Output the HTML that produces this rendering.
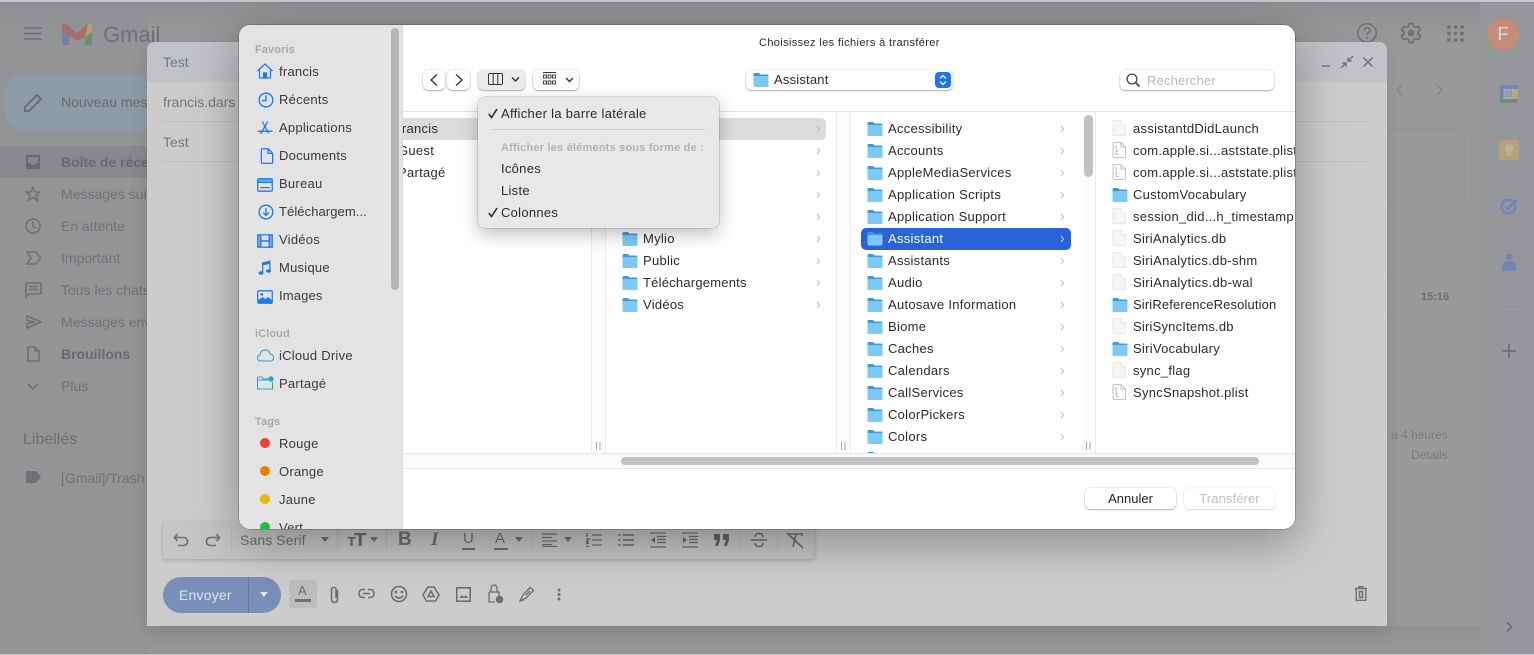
<!DOCTYPE html>
<html lang="fr"><head><meta charset="utf-8"><title>Gmail</title>
<style>
*{box-sizing:border-box}
html,body{margin:0;padding:0}
body{width:1534px;height:655px;overflow:hidden;position:relative;background:#9a9a9b;font-family:"Liberation Sans",sans-serif;font-size:13px}
div,span,svg{position:absolute}
span{white-space:nowrap;line-height:16px;height:16px}
.g{color:#707174;font-size:14px}
.s{color:#3a3a3a;font-size:13px;letter-spacing:.25px;margin-top:1px}
.h{color:#a9a9a9;font-size:11px;font-weight:bold;letter-spacing:.1px;margin-top:1px}
.c{color:#2b2b2b;font-size:13px;letter-spacing:.28px;margin-top:1px}
.btn{background:#fff;border-radius:5px;box-shadow:0 0 0 .5px rgba(0,0,0,.12),0 1px 1.5px rgba(0,0,0,.28)}
.sbi{left:257px;width:16px;height:16px;fill:none;stroke:#1a7cf0;stroke-width:1.2}
.gi{fill:none;stroke:#707174;stroke-width:1.6}
.ti{fill:none;stroke:#6f6f6f;stroke-width:1.6}
.vl{width:1px;background:#ebebeb;top:112px;height:341px}
.dot{left:260px;width:10px;height:10px;border-radius:50%}
</style></head><body>
<svg width="0" height="0" style="left:0;top:0">
<symbol id="f" viewBox="0 0 16 15"><path d="M.5 2.500Q.5 1 2 1H6L7.500 2.500H14Q15.500 2.500 15.500 4V6H.5Z" fill="#3a9bd8"/><path d="M.5 4H15.500V13Q15.500 14.500 14 14.500H2Q.5 14.500 .5 13Z" fill="#7cc8f6"/><path d="M.5 13.500Q1 14.500 2 14.500H14Q15 14.500 15.500 13.500" fill="none" stroke="#5aa9d8" stroke-width=".6"/></symbol>
<symbol id="d" viewBox="0 0 14 16"><path d="M1 1.500Q1 .5 2 .5H9L13.500 5V14.500Q13.500 15.500 12.500 15.500H2Q1 15.500 1 14.500Z" fill="#f6f6f6" stroke="#e2e2e2" stroke-width=".7"/><path d="M9 .5V5H13.500" fill="#fff" stroke="#e2e2e2" stroke-width=".7"/></symbol>
<symbol id="p" viewBox="0 0 14 16"><path d="M1 1.500Q1 .5 2 .5H9L13.500 5V14.500Q13.500 15.500 12.500 15.500H2Q1 15.500 1 14.500Z" fill="#fafafa" stroke="#b5b5b5" stroke-width=".8"/><path d="M9 .5V5H13.500M4 3V12.500M4 12.500H7M4 9.500H6" fill="none" stroke="#b5b5b5" stroke-width=".8"/></symbol>
<symbol id="r" viewBox="0 0 6 10"><path d="M2 2L4.500 5L2 8" fill="none" stroke="#b2b2b2" stroke-width=".9"/></symbol>
</svg>

<!-- window edges -->
<div style="left:0;top:0;width:1534px;height:2px;background:#c7c7c7"></div>
<div style="left:0;top:2px;width:1534px;height:1px;background:#8a8a8a"></div>
<div style="left:0;top:3px;width:147px;height:651px;background:#939496"></div>
<div style="left:0;top:3px;width:1534px;height:40px;background:linear-gradient(#8f9093,rgba(150,151,153,0))"></div>
<div style="left:1480px;top:3px;width:54px;height:651px;background:#96979a"></div>
<div style="left:147px;top:626px;width:1333px;height:28px;background:linear-gradient(#929292,#979797)"></div>
<div style="left:0;top:654px;width:1534px;height:1px;background:#c2c2c2"></div>

<!-- gmail header -->
<svg style="left:24px;top:27px" width="18" height="13"><path d="M0 1H18M0 6.500H18M0 12H18" stroke="#707174" stroke-width="1.500"/></svg>
<svg style="left:62px;top:23px" width="30" height="22" viewBox="0 0 30 22"><path d="M0 4Q0 0 4 1L7 3V22H2Q0 22 0 20Z" fill="#7083a8"/><path d="M30 4Q30 0 26 1L23 3V22H28Q30 22 30 20Z" fill="#6a8f76"/><path d="M23 3L26 1Q30 0 30 4V9L23 14Z" fill="#b3a36f"/><path d="M0 4Q0 0 4 1L15 10L26 1L23 14L15 18L7 13L0 8Z" fill="#a66e6b"/></svg>
<span style="left:103px;top:22px;font-size:22px;line-height:26px;height:26px;color:#707174">Gmail</span>

<svg class="gi" style="left:1356px;top:22px;stroke-width:1.500" width="22" height="22" viewBox="0 0 22 22"><circle cx="11" cy="11" r="9.200"/><path d="M8 8.500Q8.500 5.800 11 5.800Q14 5.800 14 8.300Q14 10 12 11Q11 11.600 11 13.500M11 15V17"/></svg>
<svg style="left:1400px;top:22px" width="22" height="22" viewBox="0 0 22 22"><path d="M9 1.500H13L13.500 4.500L15.500 5.500L18.500 4.500L20.500 8L18 10V12L20.500 14L18.500 17.500L15.500 16.500L13.500 17.500L13 20.500H9L8.500 17.500L6.500 16.500L3.500 17.500L1.500 14L4 12V10L1.500 8L3.500 4.500L6.500 5.500L8.500 4.500Z" fill="none" stroke="#707174" stroke-width="1.800" stroke-linejoin="round"/><circle cx="11" cy="11" r="3.400" fill="#707174"/></svg>
<svg style="left:1447px;top:25px" width="17" height="17" fill="#707174"><circle cx="2" cy="2" r="1.900"/><circle cx="8.500" cy="2" r="1.900"/><circle cx="15" cy="2" r="1.900"/><circle cx="2" cy="8.500" r="1.900"/><circle cx="8.500" cy="8.500" r="1.900"/><circle cx="15" cy="8.500" r="1.900"/><circle cx="2" cy="15" r="1.900"/><circle cx="8.500" cy="15" r="1.900"/><circle cx="15" cy="15" r="1.900"/></svg>
<div style="left:1487px;top:18px;width:32px;height:32px;border-radius:50%;background:#c58c79"></div>
<span style="left:1487px;width:32px;text-align:center;top:24px;font-size:18px;line-height:20px;height:20px;color:#e4d6d1">F</span>

<!-- gmail sidebar -->
<div style="left:5px;top:74px;width:170px;height:56px;border-radius:18px;background:#8e9ba6"></div>
<svg style="left:24px;top:93px" width="19" height="19" viewBox="0 0 19 19"><path d="M1 18V14L13 2L17 6L5 18Z" fill="none" stroke="#66686b" stroke-width="1.800"/></svg>
<span class="g" style="left:61px;top:94px;color:#686a6d">Nouveau mes</span>
<div style="left:0;top:146px;width:147px;height:32px;background:#87898c"></div>
<svg style="left:26px;top:155px" width="14" height="14"><path d="M0 1Q0 0 1 0H13Q14 0 14 1V13Q14 14 13 14H1Q0 14 0 13Z" fill="#696a6d"/><path d="M2 2H12V8H9.500Q9 10 7 10T4.500 8H2Z" fill="#87898c"/></svg>
<span class="g" style="left:61px;top:154px;font-weight:bold;color:#686a6d">Boîte de réce</span>
<svg class="gi" style="left:25px;top:186px" width="16" height="16" viewBox="0 0 16 16"><path d="M8 1.500L10 6H15L11 9.500L12.500 14.500L8 11.500L3.500 14.500L5 9.500L1 6H6Z"/></svg>
<span class="g" style="left:61px;top:186px">Messages sui</span>
<svg class="gi" style="left:25px;top:218px" width="16" height="16" viewBox="0 0 16 16"><circle cx="8" cy="8" r="7"/><path d="M8 3.500V8.500L11 10.500"/></svg>
<span class="g" style="left:61px;top:218px">En attente</span>
<svg class="gi" style="left:26px;top:251px" width="16" height="14" viewBox="0 0 16 14"><path d="M1 1H10L14.500 7L10 13H1L5 7Z"/></svg>
<span class="g" style="left:61px;top:250px">Important</span>
<svg class="gi" style="left:25px;top:282px" width="17" height="17" viewBox="0 0 17 17"><path d="M1 1H16V12H4L1 15ZM4 4.500H13M4 7.500H13"/></svg>
<span class="g" style="left:61px;top:282px">Tous les chats</span>
<svg class="gi" style="left:26px;top:315px" width="16" height="14" viewBox="0 0 16 14"><path d="M1 1L15 7L1 13V8.500L9 7L1 5.500Z"/></svg>
<span class="g" style="left:61px;top:314px">Messages env</span>
<svg class="gi" style="left:27px;top:346px" width="13" height="16" viewBox="0 0 13 16"><path d="M1 1H8L12 5V15H1ZM8 1V5H12"/></svg>
<span class="g" style="left:61px;top:346px;font-weight:bold;color:#686a6d">Brouillons</span>
<svg class="gi" style="left:27px;top:383px" width="12" height="8" viewBox="0 0 12 8"><path d="M1 1L6 6L11 1"/></svg>
<span class="g" style="left:61px;top:378px">Plus</span>
<span class="g" style="left:23px;top:432px;font-size:16px;color:#6d6e71">Libellés</span>
<svg style="left:26px;top:471px" width="15" height="12"><path d="M0 1Q0 0 1 0H10L15 6L10 12H1Q0 12 0 11Z" fill="#707174"/></svg>
<span class="g" style="left:61px;top:470px">[Gmail]/Trash</span>

<!-- gmail right -->
<svg class="gi" style="left:1392px;top:83px;stroke-width:1.100;opacity:.7" width="52" height="14"><path d="M10 2L5 7L10 12M45 2L50 7L45 12"/></svg>
<div style="left:1380px;top:128px;width:85px;height:78px;border:1px solid #939496;border-radius:8px"></div>
<div style="left:1387px;top:276px;width:78px;height:1px;background:#939496"></div>
<div style="left:1387px;top:316px;width:78px;height:1px;background:#939496"></div>
<span style="left:1421px;top:289px;font-size:11px;font-weight:bold;color:#6d6e70">15:16</span>
<span style="left:1391px;top:427px;font-size:12px;color:#797a7c">a 4 heures</span>
<span style="left:1411px;top:447px;font-size:12px;color:#797a7c">Détails</span>
<svg style="left:1500px;top:85px" width="18" height="18"><rect width="18" height="18" rx="1.500" fill="#7186b6"/><path d="M0 14H14V18H2Q0 18 0 16Z" fill="#6a9374"/><path d="M14 4H18V14H14Z" fill="#b8a96a"/><path d="M14 14H18L14 18Z" fill="#a9655f"/><rect x="3.500" y="4" width="10.500" height="10" fill="#a8a9ab"/><text x="8.800" y="12" font-size="8" text-anchor="middle" fill="#7186b6" font-family="Liberation Sans">31</text></svg>
<svg style="left:1499px;top:140px" width="20" height="20"><rect width="20" height="20" rx="2" fill="#b7a173"/><circle cx="10" cy="8.500" r="4.200" fill="#b5b5b0"/><rect x="7.500" y="13.500" width="5" height="2.200" fill="#b5b5b0"/></svg>
<svg style="left:1500px;top:197px" width="19" height="18" fill="none" stroke="#7186b6" stroke-width="2.500"><circle cx="8.500" cy="9.500" r="6.800"/><path d="M5 9L8 12L17 2.500"/></svg>
<svg style="left:1501px;top:253px" width="16" height="18"><circle cx="8" cy="4" r="3.300" fill="#7186b6"/><path d="M1 14Q1 8 8 8Q15 8 15 14V18H1Z" fill="#7186b6"/></svg>
<div style="left:1499px;top:306px;width:20px;height:1px;background:#8d8e90"></div>
<svg style="left:1502px;top:344px" width="14" height="14"><path d="M7 0V14M0 7H14" stroke="#68696c" stroke-width="1.500"/></svg>
<svg style="left:1506px;top:622px" width="7" height="10"><path d="M1 .5L5.500 5L1 9.500" fill="none" stroke="#68696c" stroke-width="1.500"/></svg>

<!-- compose window -->
<div style="left:147px;top:42px;width:1240px;height:584px;background:#cccccc;border-radius:8px 8px 0 0;box-shadow:0 5px 18px rgba(0,0,0,.12);overflow:hidden">
 <div style="left:0;top:0;width:1240px;height:40px;background:#c2c3c6"></div>
</div>
<span style="left:163px;top:54px;font-size:14px;color:#6f7684">Test</span>
<span style="left:163px;top:94px;font-size:14px;color:#77787a">francis.dars</span>
<div style="left:163px;top:121px;width:1208px;height:1px;background:#bebebe"></div>
<span style="left:163px;top:134px;font-size:14px;color:#77787a">Test</span>
<div style="left:163px;top:161px;width:1208px;height:1px;background:#bebebe"></div>
<svg style="left:1322px;top:55px" width="56" height="14" fill="none" stroke="#707174" stroke-width="1.400"><path d="M0 11H8"/><path d="M19 13L24 8M20.500 8H24V11.500M31 1L26 6M26 2.500V6H29.500"/><path d="M41.500 2.500L50.500 11.500M50.500 2.500L41.500 11.500"/></svg>

<!-- format toolbar -->
<div style="left:163px;top:522px;width:651px;height:37px;background:#c5c5c5;box-shadow:0 1px 4px rgba(0,0,0,.22);border-radius:2px"></div>
<svg class="ti" style="left:173px;top:532px" width="48" height="16" viewBox="0 0 48 16"><path d="M4.500 2L1.500 5.500L4.500 9M1.500 5.500H10Q14.500 5.500 14.500 9.500T10 13.500H5M43.500 2L46.500 5.500L43.500 9M46.500 5.500H38Q33.500 5.500 33.500 9.500T38 13.500H43"/></svg>
<span style="left:240px;top:532px;font-size:14px;color:#707174;letter-spacing:.1px">Sans Serif</span>
<svg style="left:320px;top:537px" width="10" height="6"><path d="M1 0H9L5 5Z" fill="#707174"/></svg>
<span style="left:347px;top:532px;font-size:18px;font-weight:bold;color:#6b6b6b;letter-spacing:-2px;transform:scaleX(1.150);transform-origin:left"><small style="font-size:13px">T</small>T</span>
<svg style="left:369px;top:537px" width="10" height="6"><path d="M1 0H9L5 5Z" fill="#707174"/></svg>
<span style="left:398px;top:532px;font-size:19px;font-weight:bold;color:#6f6f6f">B</span>
<span style="left:431px;top:532px;font-size:19px;font-weight:bold;font-style:italic;font-family:'Liberation Serif',serif;color:#6f6f6f">I</span>
<span style="left:463px;top:531px;font-size:15px;color:#6f6f6f">U</span>
<div style="left:462px;top:548px;width:13px;height:1.500px;background:#6f6f6f"></div>
<span style="left:495px;top:531px;font-size:15px;color:#6f6f6f">A</span>
<div style="left:494px;top:548px;width:14px;height:1.500px;background:#6f6f6f"></div>
<svg style="left:514px;top:537px" width="10" height="6"><path d="M1 0H9L5 5Z" fill="#707174"/></svg>
<svg class="ti" style="left:542px;top:533px;stroke-width:1.300" width="16" height="14"><path d="M0 1H15M0 4.500H10M0 8H15M0 11.500H10M0 13.500H15"/></svg>
<svg style="left:563px;top:537px" width="10" height="6"><path d="M1 0H9L5 5Z" fill="#707174"/></svg>
<svg class="ti" style="left:586px;top:533px;stroke-width:1.300" width="16" height="14"><path d="M6 2H16M6 7H16M6 12H16M1 0V4M0 6H3L0 9H3M0 10.500H3M0 13.500H3"/></svg>
<svg class="ti" style="left:618px;top:533px;stroke-width:1.500" width="16" height="14"><path d="M5 2H16M5 7H16M5 12H16M0 2H2.500M0 7H2.500M0 12H2.500"/></svg>
<svg class="ti" style="left:650px;top:532px;stroke-width:1.300" width="16" height="17"><path d="M0 1H16M7 4.500H16M7 7.500H16M7 10.500H16M0 15H16"/><path d="M5 5L1 8L5 11Z" fill="#6f6f6f" stroke="none"/></svg>
<svg class="ti" style="left:682px;top:532px;stroke-width:1.300" width="16" height="17"><path d="M0 1H16M7 4.500H16M7 7.500H16M7 10.500H16M0 15H16"/><path d="M1 5L5 8L1 11Z" fill="#6f6f6f" stroke="none"/></svg>
<svg style="left:714px;top:534px" width="16" height="12" fill="#666"><path d="M0 0H6V6L4 12H1L3 6H0ZM9 0H15V6L13 12H10L12 6H9Z"/></svg>
<svg class="ti" style="left:751px;top:532px" width="16" height="16"><path d="M0 8H16M12 5Q12 1.500 8 1.500T4 5M4 11Q4 14.500 8 14.500T12 11"/></svg>
<svg class="ti" style="left:786px;top:532px" width="18" height="17"><path d="M1 1L17 16M3 2H16V4M10 2L7 15"/></svg>
<div style="left:231px;top:530px;width:1px;height:20px;background:#bababa"></div>
<div style="left:337px;top:530px;width:1px;height:20px;background:#bababa"></div>
<div style="left:386px;top:530px;width:1px;height:20px;background:#bababa"></div>
<div style="left:531px;top:530px;width:1px;height:20px;background:#bababa"></div>
<div style="left:740px;top:530px;width:1px;height:20px;background:#bababa"></div>
<div style="left:777px;top:530px;width:1px;height:20px;background:#bababa"></div>

<!-- send row -->
<div style="left:163px;top:577px;width:118px;height:36px;border-radius:18px;background:#7a8eba"></div>
<div style="left:248px;top:577px;width:1px;height:36px;background:#6a7691"></div>
<span style="left:179px;top:587px;font-size:14px;letter-spacing:.2px;color:#dfe3ec">Envoyer</span>
<svg style="left:259px;top:592px" width="10" height="6"><path d="M1 0H9L5 5Z" fill="#dfe3ec"/></svg>
<div style="left:289px;top:580px;width:28px;height:28px;border-radius:3px;background:#bdbdbd"></div>
<span style="left:298px;top:583px;font-size:13px;color:#6f6f6f">A</span>
<div style="left:295px;top:599px;width:16px;height:3px;background:#6f6f6f"></div>
<svg class="ti" style="left:328px;top:586px" width="13" height="18" viewBox="0 0 13 18"><path d="M9.500 4V13Q9.500 16.500 6.500 16.500T3.500 13V4Q3.500 1.500 6 1.500T8 4V12"/></svg>
<svg class="ti" style="left:358px;top:588px" width="17" height="11"><path d="M7 1.500H5Q1 1.500 1 5.500T5 9.500H7M10 1.500H12Q16 1.500 16 5.500T12 9.500H10M5 5.500H12"/></svg>
<svg class="ti" style="left:390px;top:585px" width="18" height="18"><circle cx="9" cy="9" r="7.500"/><path d="M5 11Q9 15 13 11"/><circle cx="6" cy="7" r=".6"/><circle cx="12" cy="7" r=".6"/></svg>
<svg class="ti" style="left:422px;top:586px" width="18" height="16"><path d="M6 1H12L17 9L13.500 15H4.500L1 9ZM9 5L12 10.500H6Z"/></svg>
<svg class="ti" style="left:456px;top:587px" width="15" height="15"><rect x=".8" y=".8" width="13.400" height="13.400"/><path d="M3 11L6 8L8 10L10 8L12 11Z" fill="#6f6f6f" stroke="none"/></svg>
<svg class="ti" style="left:488px;top:584px;stroke-width:1.300" width="16" height="20"><path d="M1 8H11V13M1 8V18H7M3 8V5Q3 1 6 1T9 5V8"/><circle cx="11.500" cy="15.500" r="3.800" fill="#6f6f6f" stroke="none"/></svg>
<svg class="ti" style="left:519px;top:586px;stroke-width:1.300" width="16" height="17"><path d="M1 15L4 9L11 1.500L14.500 4.500L7 12ZM7 9L11 5M1 15L5 14"/></svg>
<svg style="left:557px;top:588px" width="4" height="13" fill="#707174"><circle cx="2" cy="2" r="1.500"/><circle cx="2" cy="6.500" r="1.500"/><circle cx="2" cy="11" r="1.500"/></svg>
<svg class="ti" style="left:1355px;top:586px;stroke-width:1.400" width="12" height="15"><path d="M0 2.500H12M4 2.500V.7H8V2.500M1.200 2.500V14.300H10.800V2.500M4.500 5.500V11.500H7.500V5.500Z"/></svg>

<!-- dialog -->
<div style="left:239px;top:25px;width:1056px;height:504px;border-radius:11px;background:#fff;box-shadow:0 12px 48px rgba(0,0,0,.34),0 0 0 .5px rgba(0,0,0,.35);overflow:hidden">

 <span style="left:520px;top:10px;font-size:11px;letter-spacing:.37px;color:#2c2c2c">Choisissez les fichiers à transférer</span>

 <div class="btn" style="left:184px;top:45px;width:22px;height:20px"></div>
 <div class="btn" style="left:208px;top:45px;width:23px;height:20px"></div>
 <svg style="left:190px;top:49px" width="36" height="12" fill="none" stroke="#333" stroke-width="1.300"><path d="M8 .5L2 6L8 11.500M27 .5L33 6L27 11.500"/></svg>
 <div class="btn" style="left:239px;top:45px;width:47px;height:20px;background:#ececec"></div>
 <svg style="left:249px;top:48px" width="36" height="13" fill="none" stroke="#333" stroke-width="1"><rect x=".5" y=".5" width="14" height="11" rx="1.500"/><path d="M5.200 .5V11.500M9.800 .5V11.500"/><path d="M24 4.500L27.500 8L31 4.500" stroke-width="1.500"/></svg>
 <div class="btn" style="left:294px;top:45px;width:46px;height:20px"></div>
 <svg style="left:304px;top:47px" width="30" height="14" fill="none" stroke="#333" stroke-width=".9"><path d="M0 .5H13"/><rect x=".5" y="3" width="3" height="3"/><rect x="5" y="3" width="3" height="3"/><rect x="9.500" y="3" width="3" height="3"/><rect x=".5" y="9" width="3" height="3"/><rect x="5" y="9" width="3" height="3"/><rect x="9.500" y="9" width="3" height="3"/><path d="M23 6L26.500 9.500L30 6" stroke="#333" stroke-width="1.500"/></svg>

 <div class="btn" style="left:507px;top:45px;width:207px;height:20px"></div>
 <svg style="left:514px;top:47px" width="16" height="15"><use href="#f"/></svg>
 <span style="left:535px;top:47px;font-size:13px;letter-spacing:.2px;color:#2b2b2b">Assistant</span>
 <div style="left:696px;top:47px;width:16px;height:16px;border-radius:4px;background:#1c73f0"></div>
 <svg style="left:699px;top:49px" width="10" height="12" fill="none" stroke="#fff" stroke-width="1.300"><path d="M2 4.500L5 1.500L8 4.500M2 7.500L5 10.500L8 7.500"/></svg>

 <div class="btn" style="left:881px;top:45px;width:154px;height:20px"></div>
 <svg style="left:887px;top:48px" width="15" height="15" fill="none" stroke="#444" stroke-width="1.300"><circle cx="6" cy="6" r="4.900"/><path d="M9.500 9.500L13.500 13.500" stroke-width="1.700"/></svg>
 <span style="left:908px;top:48px;font-size:13px;letter-spacing:.15px;color:#b9b9b9">Rechercher</span>

 <div style="left:163px;top:86px;width:893px;height:1px;background:#e3e3e3"></div>

 <!-- column browser -->
 <div style="left:164px;top:93px;width:423px;height:22px;background:#dcdcdc;border-radius:0 5px 5px 0"></div>
 <div style="left:164px;top:87px;width:188px;height:341px;overflow:hidden">
  <span class="c" style="left:-5px;top:8px">francis</span>
  <span class="c" style="left:-5px;top:30px">Guest</span>
  <span class="c" style="left:-5px;top:52px">Partagé</span>
 </div>

 <div class="vl" style="left:352px;top:87px"></div><div class="vl" style="left:366px;top:87px"></div>
 <div class="vl" style="left:597px;top:87px"></div><div class="vl" style="left:611px;top:87px"></div>
 <div class="vl" style="left:856px;top:87px"></div>
 <div style="left:353px;top:87px;width:13px;height:341px;background:#fcfcfc"></div>
 <div style="left:598px;top:87px;width:13px;height:341px;background:#fcfcfc"></div>
 <div style="left:843px;top:87px;width:13px;height:341px;background:#fcfcfc"></div>
 <svg style="left:357px;top:417px" width="5" height="8"><path d="M.5 0V8M4 0V8" stroke="#a9a9a9"/></svg>
 <svg style="left:602px;top:417px" width="5" height="8"><path d="M.5 0V8M4 0V8" stroke="#a9a9a9"/></svg>
 <svg style="left:847px;top:417px" width="5" height="8"><path d="M.5 0V8M4 0V8" stroke="#a9a9a9"/></svg>
 <div style="left:845px;top:90px;width:9px;height:62px;border-radius:5px;background:#c1c1c1"></div>

 <!-- col 2 -->
 <svg style="left:383px;top:206px" width="16" height="15"><use href="#f"/></svg><span class="c" style="left:404px;top:205px">Mylio</span>
 <svg style="left:383px;top:228px" width="16" height="15"><use href="#f"/></svg><span class="c" style="left:404px;top:227px">Public</span>
 <svg style="left:383px;top:250px" width="16" height="15"><use href="#f"/></svg><span class="c" style="left:404px;top:249px;letter-spacing:.22px">Téléchargements</span>
 <svg style="left:383px;top:272px" width="16" height="15"><use href="#f"/></svg><span class="c" style="left:404px;top:271px">Vidéos</span>
 <svg style="left:576px;top:99px" width="6" height="10"><use href="#r"/></svg>
 <svg style="left:576px;top:121px" width="6" height="10"><use href="#r"/></svg>
 <svg style="left:576px;top:143px" width="6" height="10"><use href="#r"/></svg>
 <svg style="left:576px;top:165px" width="6" height="10"><use href="#r"/></svg>
 <svg style="left:576px;top:187px" width="6" height="10"><use href="#r"/></svg>
 <svg style="left:576px;top:209px" width="6" height="10"><use href="#r"/></svg>
 <svg style="left:576px;top:231px" width="6" height="10"><use href="#r"/></svg>
 <svg style="left:576px;top:253px" width="6" height="10"><use href="#r"/></svg>
 <svg style="left:576px;top:275px" width="6" height="10"><use href="#r"/></svg>

 <!-- col 3 -->
 <div style="left:622px;top:203px;width:210px;height:22px;border-radius:5px;background:#2a63d9"></div>
 <svg style="left:628px;top:96px" width="16" height="15"><use href="#f"/></svg><span class="c" style="left:649px;top:95px">Accessibility</span>
 <svg style="left:628px;top:118px" width="16" height="15"><use href="#f"/></svg><span class="c" style="left:649px;top:117px">Accounts</span>
 <svg style="left:628px;top:140px" width="16" height="15"><use href="#f"/></svg><span class="c" style="left:649px;top:139px">AppleMediaServices</span>
 <svg style="left:628px;top:162px" width="16" height="15"><use href="#f"/></svg><span class="c" style="left:649px;top:161px;letter-spacing:.33px">Application Scripts</span>
 <svg style="left:628px;top:184px" width="16" height="15"><use href="#f"/></svg><span class="c" style="left:649px;top:183px">Application Support</span>
 <svg style="left:628px;top:206px" width="16" height="15"><use href="#f"/></svg><span class="c" style="left:649px;top:205px;color:#fff">Assistant</span>
 <svg style="left:628px;top:228px" width="16" height="15"><use href="#f"/></svg><span class="c" style="left:649px;top:227px">Assistants</span>
 <svg style="left:628px;top:250px" width="16" height="15"><use href="#f"/></svg><span class="c" style="left:649px;top:249px">Audio</span>
 <svg style="left:628px;top:272px" width="16" height="15"><use href="#f"/></svg><span class="c" style="left:649px;top:271px">Autosave Information</span>
 <svg style="left:628px;top:294px" width="16" height="15"><use href="#f"/></svg><span class="c" style="left:649px;top:293px">Biome</span>
 <svg style="left:628px;top:316px" width="16" height="15"><use href="#f"/></svg><span class="c" style="left:649px;top:315px">Caches</span>
 <svg style="left:628px;top:338px" width="16" height="15"><use href="#f"/></svg><span class="c" style="left:649px;top:337px">Calendars</span>
 <svg style="left:628px;top:360px" width="16" height="15"><use href="#f"/></svg><span class="c" style="left:649px;top:359px">CallServices</span>
 <svg style="left:628px;top:382px" width="16" height="15"><use href="#f"/></svg><span class="c" style="left:649px;top:381px">ColorPickers</span>
 <svg style="left:628px;top:404px" width="16" height="15"><use href="#f"/></svg><span class="c" style="left:649px;top:403px">Colors</span>
 <svg style="left:628px;top:426px" width="16" height="15"><use href="#f"/></svg>
 <svg style="left:820px;top:99px" width="6" height="10"><use href="#r"/></svg>
 <svg style="left:820px;top:121px" width="6" height="10"><use href="#r"/></svg>
 <svg style="left:820px;top:143px" width="6" height="10"><use href="#r"/></svg>
 <svg style="left:820px;top:165px" width="6" height="10"><use href="#r"/></svg>
 <svg style="left:820px;top:187px" width="6" height="10"><use href="#r"/></svg>
 <svg style="left:820px;top:209px" width="6" height="10" fill="none"><path d="M2 2L4.500 5L2 8" stroke="#dfe7fa" stroke-width=".9"/></svg>
 <svg style="left:820px;top:231px" width="6" height="10"><use href="#r"/></svg>
 <svg style="left:820px;top:253px" width="6" height="10"><use href="#r"/></svg>
 <svg style="left:820px;top:275px" width="6" height="10"><use href="#r"/></svg>
 <svg style="left:820px;top:297px" width="6" height="10"><use href="#r"/></svg>
 <svg style="left:820px;top:319px" width="6" height="10"><use href="#r"/></svg>
 <svg style="left:820px;top:341px" width="6" height="10"><use href="#r"/></svg>
 <svg style="left:820px;top:363px" width="6" height="10"><use href="#r"/></svg>
 <svg style="left:820px;top:385px" width="6" height="10"><use href="#r"/></svg>
 <svg style="left:820px;top:407px" width="6" height="10"><use href="#r"/></svg>

 <!-- col 4 -->
 <svg style="left:873px;top:95px" width="14" height="16"><use href="#d"/></svg><span class="c" style="left:894px;top:95px">assistantdDidLaunch</span>
 <svg style="left:873px;top:117px" width="14" height="16"><use href="#p"/></svg><span class="c" style="left:894px;top:117px">com.apple.si...aststate.plist</span>
 <svg style="left:873px;top:139px" width="14" height="16"><use href="#p"/></svg><span class="c" style="left:894px;top:139px">com.apple.si...aststate.plist</span>
 <svg style="left:873px;top:162px" width="16" height="15"><use href="#f"/></svg><span class="c" style="left:894px;top:161px">CustomVocabulary</span>
 <svg style="left:873px;top:183px" width="14" height="16"><use href="#d"/></svg><span class="c" style="left:894px;top:183px">session_did...h_timestamp</span>
 <svg style="left:873px;top:205px" width="14" height="16"><use href="#d"/></svg><span class="c" style="left:894px;top:205px">SiriAnalytics.db</span>
 <svg style="left:873px;top:227px" width="14" height="16"><use href="#d"/></svg><span class="c" style="left:894px;top:227px;letter-spacing:.34px">SiriAnalytics.db-shm</span>
 <svg style="left:873px;top:249px" width="14" height="16"><use href="#d"/></svg><span class="c" style="left:894px;top:249px;letter-spacing:.36px">SiriAnalytics.db-wal</span>
 <svg style="left:873px;top:272px" width="16" height="15"><use href="#f"/></svg><span class="c" style="left:894px;top:271px;letter-spacing:.14px">SiriReferenceResolution</span>
 <svg style="left:873px;top:293px" width="14" height="16"><use href="#d"/></svg><span class="c" style="left:894px;top:293px;letter-spacing:.2px">SiriSyncItems.db</span>
 <svg style="left:873px;top:316px" width="16" height="15"><use href="#f"/></svg><span class="c" style="left:894px;top:315px">SiriVocabulary</span>
 <svg style="left:873px;top:337px" width="14" height="16"><use href="#d"/></svg><span class="c" style="left:894px;top:337px">sync_flag</span>
 <svg style="left:873px;top:359px" width="14" height="16"><use href="#p"/></svg><span class="c" style="left:894px;top:359px">SyncSnapshot.plist</span>

 <!-- horizontal scroller -->
 <div style="left:163px;top:428px;width:893px;height:16px;background:#fafafa;border-top:1px solid #e6e6e6;border-bottom:1px solid #e6e6e6"></div>
 <div style="left:382px;top:432px;width:638px;height:8px;border-radius:4px;background:#c1c1c1"></div>

 <!-- bottom buttons -->
 <div class="btn" style="left:846px;top:463px;width:91px;height:21px"></div>
 <span style="left:846px;width:91px;text-align:center;top:466px;font-size:13px;color:#222">Annuler</span>
 <div class="btn" style="left:945px;top:463px;width:91px;height:21px;box-shadow:0 0 0 .5px rgba(0,0,0,.08),0 1px 1px rgba(0,0,0,.1)"></div>
 <span style="left:945px;width:91px;text-align:center;top:466px;font-size:13px;letter-spacing:.1px;color:#c0c0c0">Transférer</span>

 <!-- finder sidebar -->
 <div style="left:0;top:0;width:164px;height:504px;background:#e3e3e3;border-right:1px solid #d8d8d8"></div>
 <div style="left:152px;top:3px;width:8px;height:262px;border-radius:4px;background:#b6b6b6"></div>
 <span class="h" style="left:16px;top:16px">Favoris</span>
 <svg class="sbi" style="left:18px;top:38px" width="16" height="16" viewBox="0 0 16 16"><path d="M.5 8L8 1L15.500 8M2.500 6.500V15H13.500V6.500M6.500 15V10H9.500V15" /><path d="M6 10H10V15H6Z" fill="#1a7cf0" stroke="none"/></svg>
 <span class="s" style="left:40px;top:38px">francis</span>
 <svg class="sbi" style="left:19px;top:67px" width="14" height="14" viewBox="0 0 14 14"><circle cx="7" cy="7" r="6"/><path d="M7 3V7.500H3.500"/></svg>
 <span class="s" style="left:40px;top:66px">Récents</span>
 <svg class="sbi" style="left:18px;top:95px" width="15" height="15" viewBox="0 0 15 15"><path d="M5 1.500L11 12.500M10 1.500L3.500 13M.5 10.500H14.500"/></svg>
 <span class="s" style="left:40px;top:94px">Applications</span>
 <svg class="sbi" style="left:20px;top:123px" width="12" height="15" viewBox="0 0 12 15"><path d="M.7 1.500Q.7 .7 1.500 .7H7L11.300 5V13.500Q11.300 14.300 10.500 14.300H1.500Q.7 14.300 .7 13.500ZM7 .7V5H11.300"/></svg>
 <span class="s" style="left:40px;top:122px">Documents</span>
 <svg class="sbi" style="left:18px;top:152px" width="15" height="13" viewBox="0 0 15 13"><rect x=".7" y=".7" width="13.600" height="11.600" rx="1"/><path d="M.7 4H14.300M3 9H12" /><rect x=".7" y=".7" width="13.600" height="3.300" fill="#1a7cf0" stroke="none" opacity=".55"/></svg>
 <span class="s" style="left:40px;top:150px">Bureau</span>
 <svg class="sbi" style="left:19px;top:179px" width="14" height="14" viewBox="0 0 14 14"><circle cx="7" cy="7" r="6"/><path d="M7 3.500V10M4.500 7.500L7 10L9.500 7.500"/></svg>
 <span class="s" style="left:40px;top:178px;letter-spacing:.08px">Téléchargem...</span>
 <svg class="sbi" style="left:18px;top:208px" width="15" height="13" viewBox="0 0 15 13"><rect x=".7" y=".7" width="13.600" height="11.600"/><path d="M3.500 .7V12.300M11.500 .7V12.300M3.500 6.500H11.500" stroke-width="1.300"/><path d="M.7 .7H3.500V12.300H.7ZM11.500 .7H14.300V12.300H11.500Z" fill="#1a7cf0" stroke="none" opacity=".5"/></svg>
 <span class="s" style="left:40px;top:206px">Vidéos</span>
 <svg style="left:19px;top:235px" width="14" height="15" viewBox="0 0 14 15" fill="#1a7cf0"><path d="M4 2.500L12.500 .5V11H11.200V4L5.300 5.300V13H4Z"/><ellipse cx="3" cy="13" rx="2.500" ry="1.800"/><ellipse cx="10.500" cy="11" rx="2.500" ry="1.800"/></svg>
 <span class="s" style="left:40px;top:234px">Musique</span>
 <svg class="sbi" style="left:18px;top:264px" width="15" height="13" viewBox="0 0 15 13"><rect x=".7" y=".7" width="13.600" height="11.600" rx="1"/><circle cx="4.500" cy="4" r="1.200" fill="#1a7cf0" stroke="none"/><path d="M1 12V9.500L5 6.500L8 8.500L10.500 6.500L14 9.500V12Z" fill="#1a7cf0" stroke="none"/></svg>
 <span class="s" style="left:40px;top:262px;letter-spacing:.15px">Images</span>
 <span class="h" style="left:16px;top:300px">iCloud</span>
 <svg style="left:18px;top:324px" width="17" height="13" fill="none" stroke="#2ba3c7" stroke-width="1"><path d="M4 12Q.5 12 .5 9Q.5 6.500 3 6Q3.500 1 8.500 1Q12.500 1 13 5Q16.500 5.500 16.500 8.500Q16.500 12 13 12Z"/></svg>
 <span class="s" style="left:40px;top:322px">iCloud Drive</span>
 <svg style="left:18px;top:351px" width="17" height="14" fill="none" stroke="#2ba3c7" stroke-width="1"><path d="M.5 1H5L6.500 3H13M.5 1V13H15.500V6M.5 4H11"/><circle cx="14" cy="3" r="2.700" fill="#2ba3c7" stroke="none"/></svg>
 <span class="s" style="left:40px;top:350px">Partagé</span>
 <span class="h" style="left:16px;top:388px">Tags</span>
 <div class="dot" style="left:21px;top:413px;background:#fb3a30"></div><span class="s" style="left:40px;top:410px">Rouge</span>
 <div class="dot" style="left:21px;top:441px;background:#e98100"></div><span class="s" style="left:40px;top:438px">Orange</span>
 <div class="dot" style="left:21px;top:469px;background:#ecb800"></div><span class="s" style="left:40px;top:466px">Jaune</span>
 <div class="dot" style="left:21px;top:497px;background:#1fbf39"></div><span class="s" style="left:40px;top:494px">Vert</span>

 <!-- popup menu -->
 <div style="left:239px;top:72px;width:241px;height:131px;border-radius:7px;background:#e8e8e8;box-shadow:0 0 0 .5px rgba(0,0,0,.22),0 6px 18px rgba(0,0,0,.26)"></div>
 <svg style="left:249px;top:83px" width="10" height="11" fill="none" stroke="#2a2a2a" stroke-width="1.600"><path d="M.8 6L3.500 9.500L9 1"/></svg>
 <span class="c" style="left:262px;top:80px;letter-spacing:.3px">Afficher la barre latérale</span>
 <div style="left:252px;top:104px;width:214px;height:1px;background:#cfcfcf"></div>
 <span style="left:262px;top:115px;font-size:11px;font-weight:bold;letter-spacing:.2px;color:#b3b3b3">Afficher les éléments sous forme de :</span>
 <span class="c" style="left:262px;top:135px">Icônes</span>
 <span class="c" style="left:262px;top:157px">Liste</span>
 <svg style="left:249px;top:182px" width="10" height="11" fill="none" stroke="#2a2a2a" stroke-width="1.600"><path d="M.8 6L3.500 9.500L9 1"/></svg>
 <span class="c" style="left:262px;top:179px">Colonnes</span>
</div>
</body></html>
